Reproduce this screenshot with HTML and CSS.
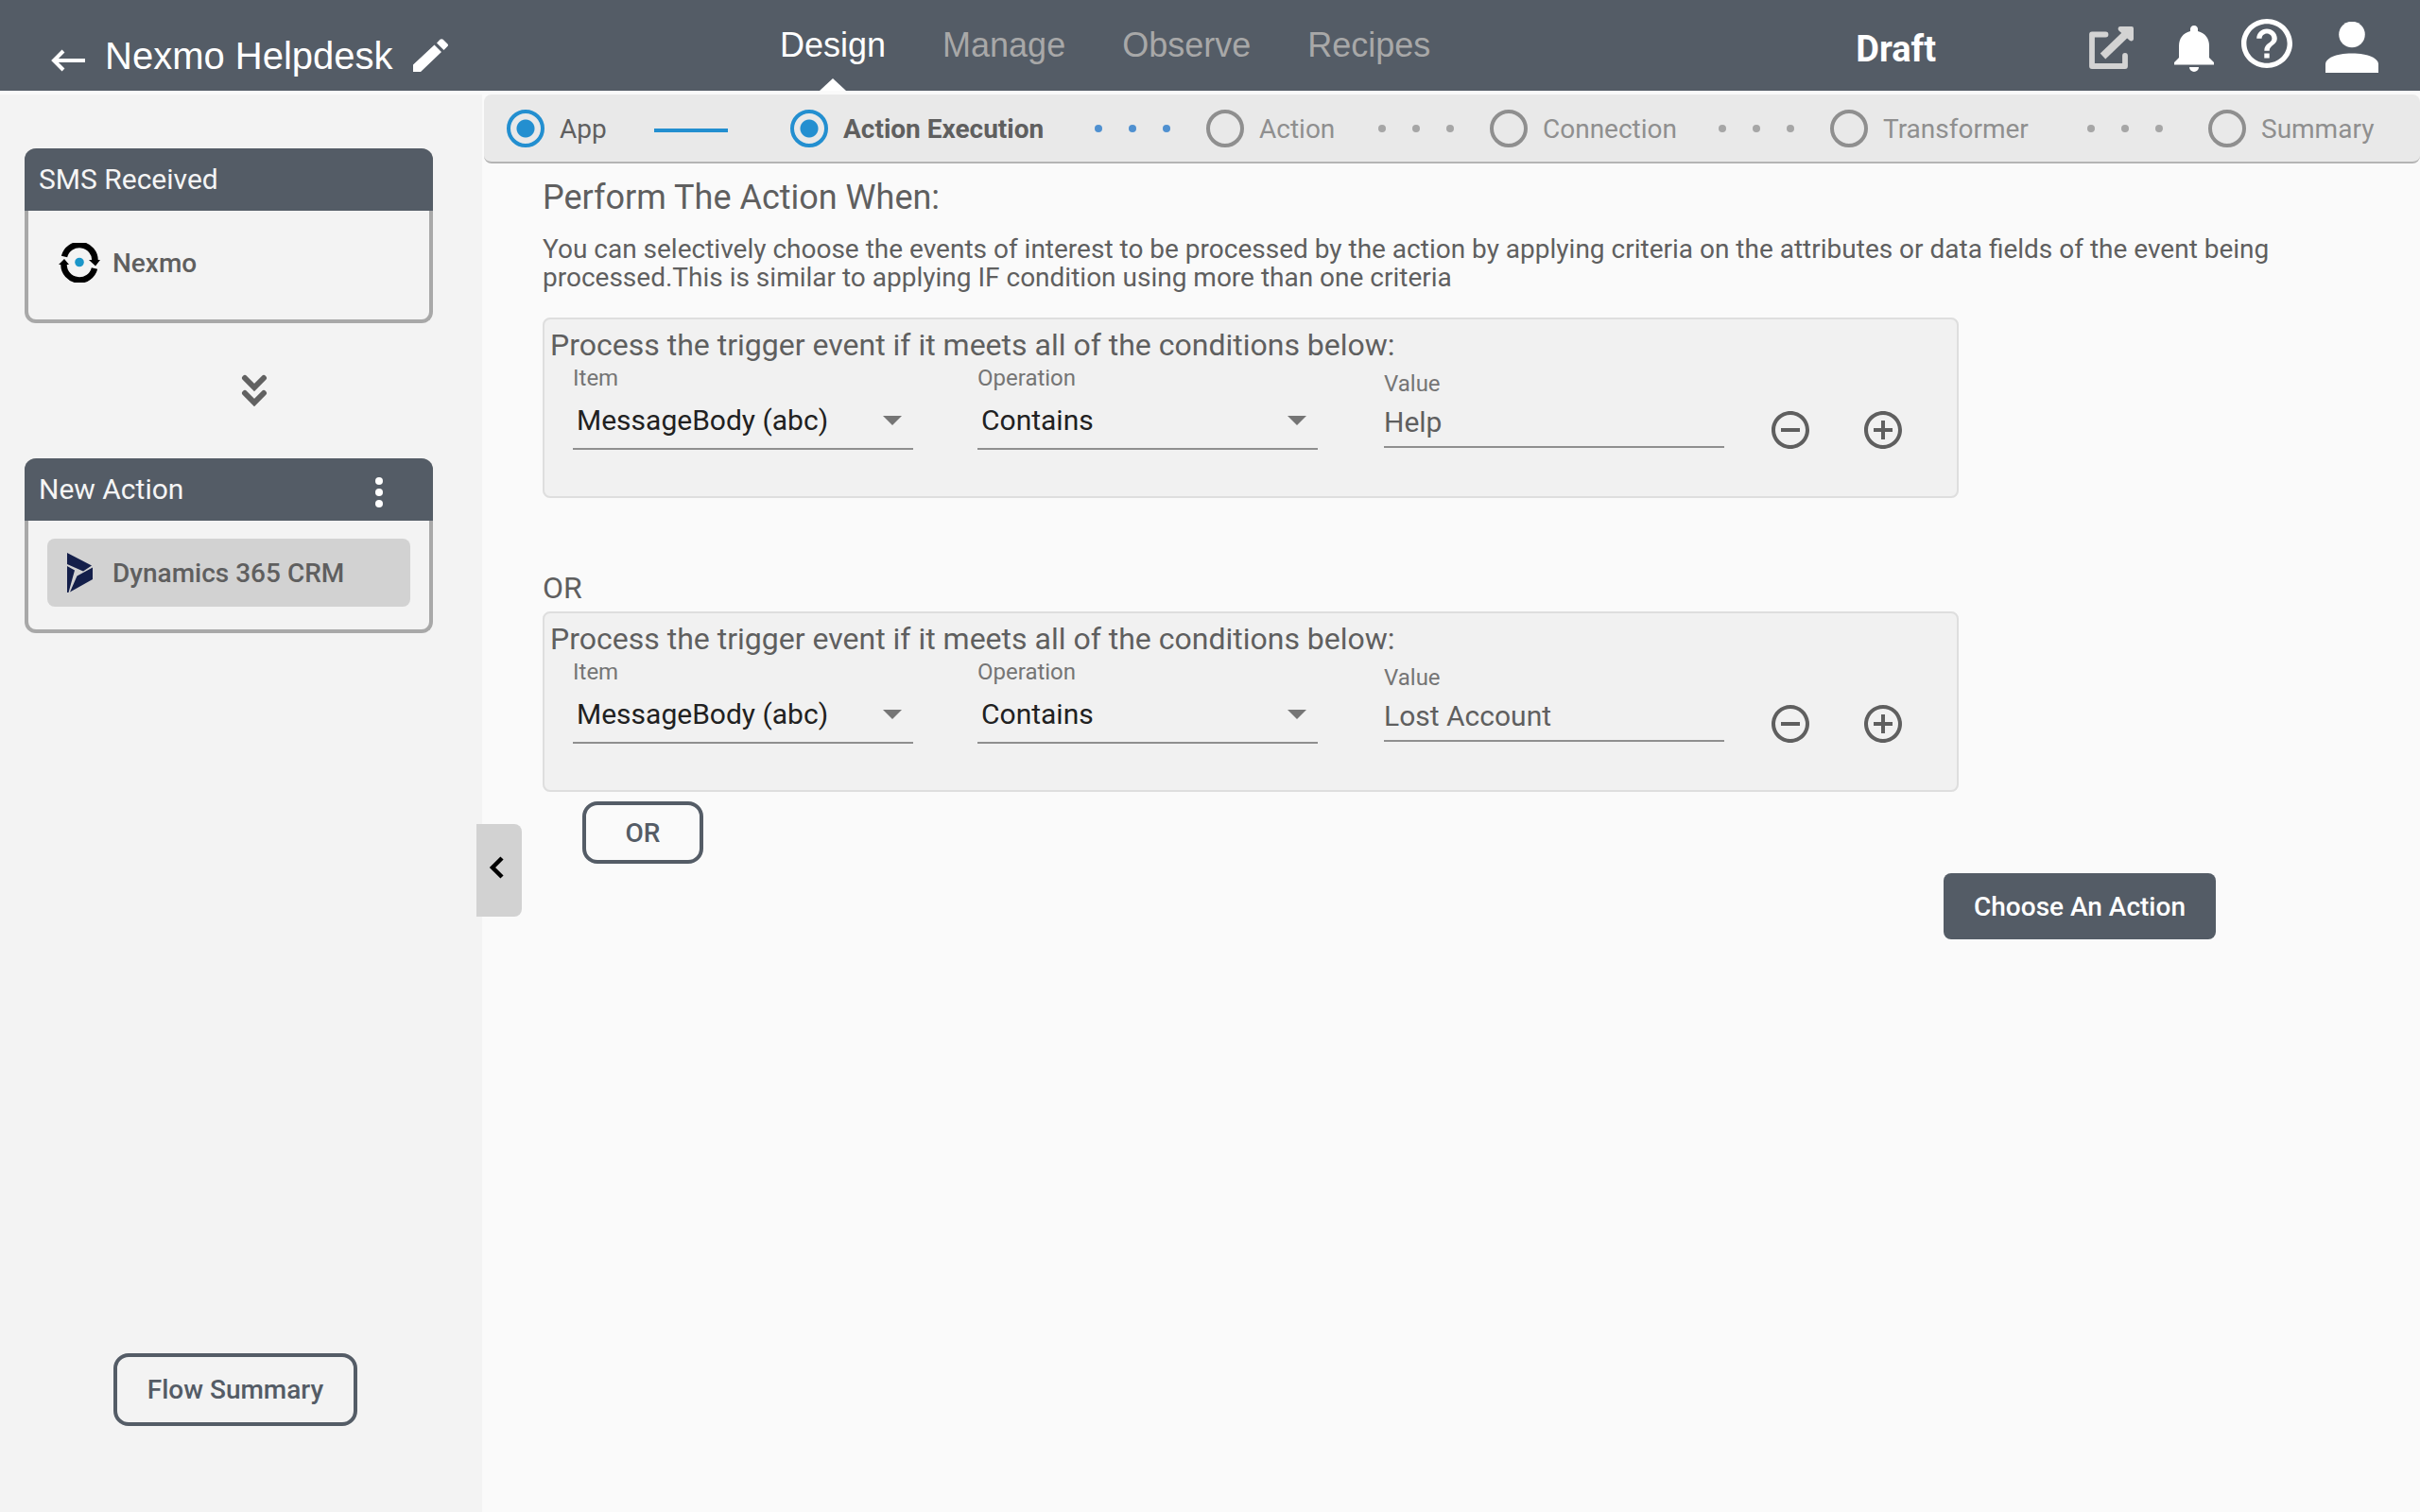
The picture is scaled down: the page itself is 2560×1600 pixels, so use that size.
FILE: index.html
```html
<!DOCTYPE html>
<html lang="en">
<head>
<meta charset="utf-8">
<meta name="viewport" content="width=device-width, initial-scale=1">
<title>Nexmo Helpdesk</title>
<link rel="stylesheet" href="styles.css">
</head>
<body>
<header class="topbar">
  <div class="flow-title">
    <a class="icon-link" href="#" aria-label="Back">
      <svg width="36" height="26" viewBox="0 0 36 26" fill="none" stroke="#fff" stroke-width="4"><path d="M36 13H3M13 3L3 13l10 10"/></svg>
    </a>
    <h1 class="flow-name">Nexmo Helpdesk</h1>
    <button class="icon-button rename" aria-label="Rename">
      <svg width="38" height="36" viewBox="0 0 38 36" fill="#fff"><path d="M0 27.500V35h8L30 14l-7.500-7.500zM25 4.500l3.500-3.700a2.500 2.500 0 0 1 3.200 0l4.500 4.500a2 2 0 0 1 0 3L32.500 12z"/></svg>
    </button>
  </div>
  <nav class="tabs">
    <a class="tab tab-active" href="#">Design</a>
    <a class="tab" href="#">Manage</a>
    <a class="tab" href="#">Observe</a>
    <a class="tab" href="#">Recipes</a>
  </nav>
  <div class="tools">
    <span class="status">Draft</span>
    <button class="icon-button tool-open" aria-label="Open in new window">
      <svg width="48" height="46" viewBox="0 0 48 46"><g fill="none" stroke="#d3d3d3" stroke-linecap="round" stroke-linejoin="round"><path stroke-width="5.800" d="M17.500 8.500H3v33.500h35V31"/></g><path stroke="#d3d3d3" stroke-width="8" d="M14.500 31.500L40 7"/><path fill="#d3d3d3" d="M33 0h12a2 2 0 0 1 2 2v11c0 2-2 3-4 2L31 4c-1-2 0-4 2-4z"/></svg>
    </button>
    <button class="icon-button tool-bell" aria-label="Notifications">
      <svg width="42" height="49" viewBox="0 0 42 49" fill="#fff"><path d="M21 0a4 4 0 0 1 4 4.500v1.500c8 2 12 8 12 15.500V34l5 5v2.500H0V39l5-5V21.500C5 14 9 8 17 6V4.500A4 4 0 0 1 21 0zM16 44h10a5 5 0 0 1-10 0z"/></svg>
    </button>
    <button class="icon-button tool-help" aria-label="Help">
      <svg width="54" height="52" viewBox="2 2 20 20" preserveAspectRatio="none" fill="#fff"><path d="M11 18h2v-2h-2v2zm1-16C6.480 2 2 6.480 2 12s4.480 10 10 10 10-4.480 10-10S17.520 2 12 2zm0 18c-4.410 0-8-3.590-8-8s3.590-8 8-8 8 3.590 8 8-3.590 8-8 8zm0-14c-2.210 0-4 1.790-4 4h2c0-1.100.9-2 2-2s2 .9 2 2c0 2-3 1.750-3 5h2c0-2.250 3-2.500 3-5 0-2.210-1.790-4-4-4z"/></svg>
    </button>
    <button class="icon-button tool-user" aria-label="Account">
      <svg width="56" height="54" viewBox="0 0 56 54" fill="#fff"><circle cx="28" cy="13.500" r="13.800"/><path d="M0 54v-9c0-6 10-11.500 28-11.500S56 39 56 45v9z"/></svg>
    </button>
  </div>
</header>
<div class="workspace">
  <aside class="sidebar">
    <section class="card">
      <h2 class="card-head">SMS Received</h2>
      <div class="card-item">
        <svg width="44" height="42" viewBox="0 0 44 42"><g fill="none" stroke="#000" stroke-width="6.500"><path d="M6 14.500A16.500 16.500 0 0 1 38.500 19"/><path d="M38 27A16.500 16.500 0 0 1 5.500 23"/></g><path d="M32 18h12l-5 6.500zM0 23h11l-5-6z"/><circle cx="22" cy="20.500" r="4.800" fill="#1b96c9"/></svg>
        <span>Nexmo</span>
      </div>
    </section>
    <svg class="flow-arrow" width="28" height="34" viewBox="0 0 28 34" fill="none" stroke="#616161" stroke-width="6" stroke-linecap="round" stroke-linejoin="miter"><path d="M4 4l10 10L24 4M4 20l10 10 10-10"/></svg>
    <section class="card">
      <div class="card-head">
        <h2 class="card-title">New Action</h2>
        <button class="icon-button menu-button" aria-label="Action menu">
          <svg width="8" height="32" viewBox="0 0 8 32" fill="#fff"><circle cx="4" cy="4" r="4"/><circle cx="4" cy="16" r="4"/><circle cx="4" cy="28" r="4"/></svg>
        </button>
      </div>
      <div class="card-item card-item-active">
        <svg width="44" height="42" viewBox="0 0 44 42" fill="#141f4a"><path d="M9 0l26 13.500-9 6L9 12zM9 14l8 4.500L10.500 42H9zM36 15.500V28L12 41.500l7.500-17z"/></svg>
        <span>Dynamics 365 CRM</span>
      </div>
    </section>
    <button class="outline-button summary-button">Flow Summary</button>
    <button class="collapse" aria-label="Collapse panel">
      <svg width="16" height="24" viewBox="0 0 16 24" fill="none" stroke="#000" stroke-width="4.500"><path d="M14 2L4 12l10 10"/></svg>
    </button>
  </aside>
  <main class="main">
    <ol class="steps">
      <li class="step step-done"><span class="ring"></span><span class="step-name">App</span><span class="bar"></span></li>
      <li class="step step-current"><span class="ring"></span><span class="step-name">Action Execution</span><span class="dots"><i></i><i></i><i></i></span></li>
      <li class="step"><span class="ring"></span><span class="step-name">Action</span><span class="dots"><i></i><i></i><i></i></span></li>
      <li class="step"><span class="ring"></span><span class="step-name">Connection</span><span class="dots"><i></i><i></i><i></i></span></li>
      <li class="step step-wide"><span class="ring"></span><span class="step-name">Transformer</span><span class="dots"><i></i><i></i><i></i></span></li>
      <li class="step"><span class="ring"></span><span class="step-name">Summary</span></li>
    </ol>
    <div class="content">
      <h2 class="heading">Perform The Action When:</h2>
      <p class="intro">You can selectively choose the events of interest to be processed by the action by applying criteria on the attributes or data fields of the event being processed.This is similar to applying IF condition using more than one criteria</p>
      <fieldset class="group">
        <div class="group-title">Process the trigger event if it meets all of the conditions below:</div>
        <div class="rule">
          <div class="field">
            <label class="label" for="item1">Item</label>
            <select class="select" id="item1"><option>MessageBody (abc)</option></select>
          </div>
          <div class="field">
            <label class="label" for="op1">Operation</label>
            <select class="select" id="op1"><option>Contains</option></select>
          </div>
          <div class="field field-value">
            <label class="label" for="val1">Value</label>
            <input class="input" id="val1" type="text" value="Help">
          </div>
          <button class="icon-button rule-button" aria-label="Remove condition">
            <svg width="40" height="40" viewBox="2 2 20 20" fill="#5f5f5f"><path d="M7 11v2h10v-2H7zm5-9C6.480 2 2 6.480 2 12s4.480 10 10 10 10-4.480 10-10S17.520 2 12 2zm0 18c-4.410 0-8-3.590-8-8s3.590-8 8-8 8 3.590 8 8-3.590 8-8 8z"/></svg>
          </button>
          <button class="icon-button rule-button" aria-label="Add condition">
            <svg width="40" height="40" viewBox="2 2 20 20" fill="#5f5f5f"><path d="M13 7h-2v4H7v2h4v4h2v-4h4v-2h-4V7zm-1-5C6.480 2 2 6.480 2 12s4.480 10 10 10 10-4.480 10-10S17.520 2 12 2zm0 18c-4.410 0-8-3.590-8-8s3.590-8 8-8 8 3.590 8 8-3.590 8-8 8z"/></svg>
          </button>
        </div>
      </fieldset>
      <div class="or-label">OR</div>
      <fieldset class="group">
        <div class="group-title">Process the trigger event if it meets all of the conditions below:</div>
        <div class="rule">
          <div class="field">
            <label class="label" for="item2">Item</label>
            <select class="select" id="item2"><option>MessageBody (abc)</option></select>
          </div>
          <div class="field">
            <label class="label" for="op2">Operation</label>
            <select class="select" id="op2"><option>Contains</option></select>
          </div>
          <div class="field field-value">
            <label class="label" for="val2">Value</label>
            <input class="input" id="val2" type="text" value="Lost Account">
          </div>
          <button class="icon-button rule-button" aria-label="Remove condition">
            <svg width="40" height="40" viewBox="2 2 20 20" fill="#5f5f5f"><path d="M7 11v2h10v-2H7zm5-9C6.480 2 2 6.480 2 12s4.480 10 10 10 10-4.480 10-10S17.520 2 12 2zm0 18c-4.410 0-8-3.590-8-8s3.590-8 8-8 8 3.590 8 8-3.590 8-8 8z"/></svg>
          </button>
          <button class="icon-button rule-button" aria-label="Add condition">
            <svg width="40" height="40" viewBox="2 2 20 20" fill="#5f5f5f"><path d="M13 7h-2v4H7v2h4v4h2v-4h4v-2h-4V7zm-1-5C6.480 2 2 6.480 2 12s4.480 10 10 10 10-4.480 10-10S17.520 2 12 2zm0 18c-4.410 0-8-3.590-8-8s3.590-8 8-8 8 3.590 8 8-3.590 8-8 8z"/></svg>
          </button>
        </div>
      </fieldset>
      <button class="outline-button or-button">OR</button>
      <div class="actions"><button class="primary-button">Choose An Action</button></div>
    </div>
  </main>
</div>
</body>
</html>
```
FILE: styles.css
```css
* { box-sizing: border-box; }
body {
  margin: 0;
  min-height: 100vh;
  display: flex;
  flex-direction: column;
  background: #fafafa;
  color: #5f5f5f;
  font-family: Roboto, "Liberation Sans", sans-serif;
  font-size: 28px;
}
h1, h2, p, ol { margin: 0; padding: 0; font-weight: 400; }
button, select, input { font: inherit; color: inherit; }
svg { display: block; flex: none; }
a { color: inherit; text-decoration: none; }
.icon-button { display: block; padding: 0; border: 0; background: none; }

/* Top bar */
.topbar {
  display: flex;
  height: 96px;
  background: #545c66;
  color: #fff;
}
.flow-title {
  display: flex;
  align-items: center;
  gap: 21px;
  width: 825px;
  padding: 22px 0 0 54px;
}
.icon-link { padding-top: 10px; }
.flow-name {
  font: 40px/48px "Liberation Sans", Arial, sans-serif;
}
.tabs {
  display: flex;
  gap: 60px;
  font: 36px/96px "Liberation Sans", Arial, sans-serif;
}
.tab { color: #a8a8a8; }
.tab-active { position: relative; color: #fff; }
.tab-active::after {
  content: "";
  position: absolute;
  left: calc(50% - 14px);
  bottom: 0;
  border: 14px solid transparent;
  border-top: 0;
  border-bottom: 13px solid #fff;
}
.tools {
  display: flex;
  align-items: flex-start;
  margin-left: auto;
  padding-right: 44px;
}
.status { margin-right: 162px; font-size: 38px; line-height: 104px; font-weight: 700; }
.tool-open { margin: 28px 42px 0 0; }
.tool-bell { margin: 27px 29px 0 0; }
.tool-help { margin: 20px 35px 0 0; }
.tool-user { margin-top: 23px; }

/* Page columns */
.workspace { display: flex; flex: 1; padding-top: 4px; }
.sidebar {
  position: relative;
  display: flex;
  flex-direction: column;
  flex: none;
  width: 510px;
  padding: 57px 52px 91px 26px;
  background: #f3f3f3;
}
.card {
  border: 4px solid #a8a8a8;
  border-top: 0;
  border-radius: 12px;
  min-height: 185px;
}
.card-head {
  display: flex;
  align-items: center;
  justify-content: space-between;
  margin: 0 -4px;
  padding: 0 53px 0 15px;
  border-radius: 12px 12px 0 0;
  background: #545c66;
  color: #f5f5f5;
  font-size: 30px;
  line-height: 66px;
}
.card-title { font-size: 30px; }
.menu-button { padding-top: 6px; }
.card-item {
  display: flex;
  align-items: center;
  gap: 13px;
  height: 72px;
  margin: 19px 20px 0;
  padding-left: 12px;
  border-radius: 8px;
  font-weight: 500;
}
.card-item-active { background: #d2d2d2; }
.flow-arrow { margin: 54px auto 55px 229px; }
.outline-button {
  border: 4px solid #545c66;
  border-radius: 16px;
  background: none;
  color: #545c66;
  font-weight: 500;
}
.summary-button { width: 258px; height: 77px; margin: auto 0 0 94px; }
.collapse {
  position: absolute;
  z-index: 1;
  left: 504px;
  top: 772px;
  width: 48px;
  height: 98px;
  padding: 0 0 6px 13px;
  border: 0;
  border-radius: 0 8px 8px 0;
  background: #d2d2d2;
}

/* Step bar */
.main { flex: 1; min-width: 0; padding-left: 2px; }
.steps {
  display: grid;
  grid-template-columns: 300fr 440fr 300fr 360fr 400fr 224fr;
  height: 73px;
  padding-left: 24px;
  border-bottom: 2px solid #b4b4b4;
  border-radius: 8px;
  background: #e9e9e9;
  list-style: none;
}
.step { display: flex; align-items: center; gap: 16px; color: #8f8f8f; }
.step-done, .step-current { color: #5f5f5f; }
.step-current { font-weight: 700; }
.step-name { padding-top: 2px; }
.ring {
  width: 40px;
  height: 40px;
  border: 4px solid #8f8f8f;
  border-radius: 50%;
}
.step-done .ring, .step-current .ring {
  border-color: #238fd0;
  background: radial-gradient(circle, #238fd0 9px, transparent 10px);
}
.bar { width: 78px; height: 4px; margin: 4px 66px 0 auto; background: #238fd0; }
.dots { display: flex; gap: 28px; margin: 0 38px 0 auto; }
.dots i { width: 8px; height: 8px; border-radius: 50%; background: #a6a6a6; }
.step-current i { background: #4f90d0; }
.step-wide .dots { margin-right: 48px; }

/* Rules */
.content { padding: 12px 140px 0 62px; }
.heading { font-size: 36px; line-height: 48px; }
.intro { margin-top: 16px; font-size: 28px; line-height: 30px; }
.group {
  max-width: 1496px;
  height: 191px;
  margin: 27px 0 0;
  padding: 0 0 0 30px;
  border: 2px solid #dedede;
  border-radius: 8px;
  background: #f1f1f1;
}
.group-title { margin-left: -24px; font-size: 32px; line-height: 54px; }
.rule { display: flex; align-items: flex-start; }
.field { display: flex; flex-direction: column; width: 360px; margin-right: 68px; }
.field-value { margin: 6px 50px 0 2px; }
.label { color: #757575; font-size: 24px; line-height: 16px; }
.select, .input {
  width: 100%;
  border: 0;
  border-bottom: 2px solid #8f8f8f;
  border-radius: 0;
  font-size: 30px;
}
.select {
  appearance: none;
  height: 56px;
  margin-top: 12px;
  padding: 0 0 6px 4px;
  background: url("data:image/svg+xml,%3Csvg xmlns='http://www.w3.org/2000/svg' width='20' height='10'%3E%3Cpath d='M0 0h20L10 10z' fill='%23757575'/%3E%3C/svg%3E") no-repeat right 12px top 20px;
  color: #212121;
}
.input { height: 50px; margin-top: 10px; padding: 0 0 4px; background: none; }
.rule-button { margin: 43px 58px 0 0; }
.or-label { margin-top: 70px; font-size: 32px; line-height: 50px; }
.or-label + .group { margin-top: 0; }
.or-button { display: block; width: 128px; height: 66px; margin: 10px 0 0 42px; }
.actions { display: flex; justify-content: flex-end; padding: 10px 76px 0 0; }
.primary-button {
  width: 288px;
  height: 70px;
  padding: 0;
  border: 0;
  border-radius: 8px;
  background: #545c66;
  color: #fff;
  font-weight: 500;
}
```
